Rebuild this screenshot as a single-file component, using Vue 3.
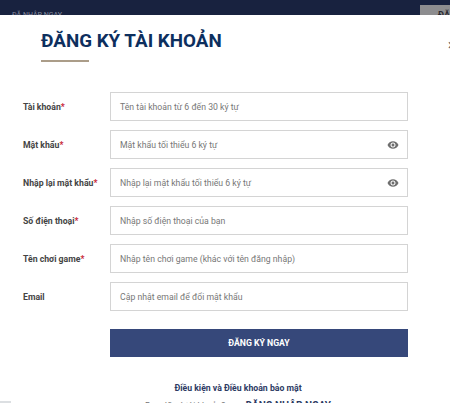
<script setup>
const rows = [
  { label: 'Tài khoản', req: true, ph: 'Tên tài khoản từ 6 đến 30 ký tự' },
  { label: 'Mật khẩu', req: true, ph: 'Mật khẩu tối thiểu 6 ký tự', eye: true },
  { label: 'Nhập lại mật khẩu', req: true, ph: 'Nhập lại mật khẩu tối thiểu 6 ký tự', eye: true },
  { label: 'Số điện thoại', req: true, ph: 'Nhập số điện thoại của bạn' },
  { label: 'Tên chơi game', req: true, ph: 'Nhập tên chơi game (khác với tên đăng nhập)' },
  { label: 'Email', req: false, ph: 'Cập nhật email để đổi mật khẩu' },
]
</script>

<template>
  <div class="page">
    <header class="topbar">
      <span class="top-text">ĐĂ NHẬP NGAY</span>
      <span class="top-btn">ĐĂNG</span>
    </header>
    <main class="modal">
      <span class="close">×</span>
      <h1 class="title">ĐĂNG KÝ TÀI KHOẢN</h1>
      <div class="rule"></div>
      <form class="form" @submit.prevent>
        <div v-for="r in rows" :key="r.label" class="row">
          <label class="label">{{ r.label }}<span v-if="r.req" class="req">*</span></label>
          <div class="field">
            <span class="ph">{{ r.ph }}</span>
            <svg v-if="r.eye" class="eye" viewBox="0 0 24 24" width="12" height="12">
              <path fill="#6f6f6f" d="M12 4.5C7 4.5 2.73 7.61 1 12c1.73 4.39 6 7.5 11 7.5s9.27-3.11 11-7.5c-1.73-4.39-6-7.5-11-7.5zM12 17c-2.76 0-5-2.24-5-5s2.24-5 5-5 5 2.24 5 5-2.24 5-5 5zm0-8c-1.66 0-3 1.34-3 3s1.34 3 3 3 3-1.34 3-3-1.34-3-3-3z"/>
            </svg>
          </div>
        </div>
        <button class="submit" type="submit">ĐĂNG KÝ NGAY</button>
      </form>
      <p class="terms">Điều kiện và Điều khoản bảo mật</p>
      <p class="login"><span class="muted">Bạn đã có tài khoản?</span><span class="login-link">ĐĂNG NHẬP NGAY</span></p>
      <div class="corner"></div>
    </main>
  </div>
</template>

<style scoped>
.page {
  width: 450px;
  height: 403px;
  overflow: hidden;
  font-family: Roboto, "Liberation Sans", sans-serif;
  background: #fff;
  display: flex;
  flex-direction: column;
}
.topbar {
  height: 15px;
  flex: none;
  background: #18223f;
  display: flex;
  justify-content: space-between;
  align-items: flex-start;
  overflow: hidden;
}
.top-text {
  margin: 11px 0 0 12px;
  font-size: 7px;
  line-height: 9px;
  color: #8b90a0;
}
.top-btn {
  margin-top: 5px;
  width: 30px;
  height: 20px;
  background: #8d8d8f;
  color: #2a2a30;
  font-size: 9px;
  font-weight: 700;
  line-height: 20px;
  padding-left: 18px;
  box-sizing: border-box;
  white-space: nowrap;
  overflow: hidden;
}
.modal {
  position: relative;
  flex: 1;
  padding-left: 41px;
  box-sizing: border-box;
}
.close {
  position: absolute;
  left: 448px;
  top: 20px;
  font-size: 14px;
  line-height: 20px;
  color: #666;
}
.title {
  margin: 14px 0 0;
  font-size: 18.8px;
  line-height: 25px;
  font-weight: 700;
  color: #0d2f5e;
  white-space: nowrap;
}
.rule {
  margin-top: 6px;
  width: 48px;
  height: 2px;
  background: #ab9d89;
}
.form {
  margin: 30px 0 0 -18px;
  width: 385px;
  display: flex;
  flex-direction: column;
  gap: 9px;
}
.row {
  display: flex;
  align-items: center;
  height: 29px;
}
.label {
  width: 87px;
  flex: none;
  font-size: 8.7px;
  font-weight: 700;
  color: #444;
  white-space: nowrap;
}
.req {
  color: #c8283a;
}
.field {
  flex: 1;
  height: 29px;
  box-sizing: border-box;
  border: 1px solid #d4d4d4;
  padding: 0 9px;
  display: flex;
  align-items: center;
  justify-content: space-between;
  background: #fff;
}
.ph {
  font-size: 8.7px;
  color: #777;
  white-space: nowrap;
}
.eye {
  flex: none;
  margin-right: -1px;
}
.submit {
  margin: 9px 0 0 87px;
  width: 298px;
  height: 28px;
  border: none;
  padding: 0;
  background: #36487a;
  color: #fff;
  font-family: inherit;
  font-size: 8.7px;
  font-weight: 700;
}
.terms {
  margin: 24px 0 0 0;
  width: 394px;
  text-align: center;
  font-size: 8.7px;
  line-height: 14px;
  font-weight: 700;
  color: #2d3a63;
}
.login {
  margin: 4px 0 0 0;
  width: 394px;
  display: flex;
  justify-content: center;
  align-items: baseline;
  gap: 20px;
  line-height: 14px;
}
.muted {
  font-size: 8.7px;
  color: #777;
}
.login-link {
  font-size: 10px;
  font-weight: 700;
  color: #2d3a63;
}
.corner {
  position: absolute;
  left: 0;
  bottom: 0;
  width: 11px;
  height: 12px;
  background: #dcdfe2;
}
</style>
